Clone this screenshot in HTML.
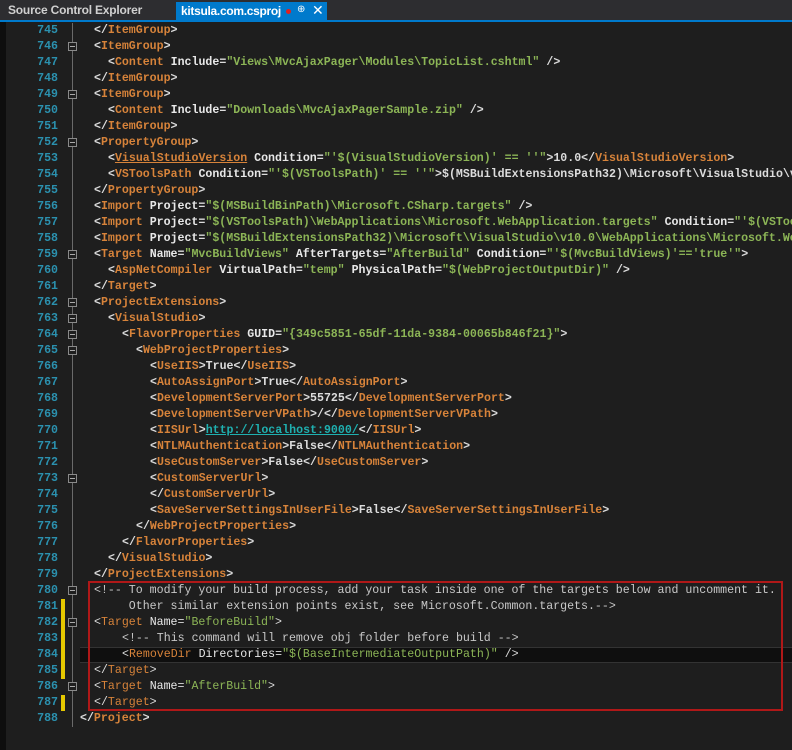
<!DOCTYPE html>
<html><head><meta charset="utf-8"><style>
html,body{margin:0;width:792px;height:750px;overflow:hidden}
body{background:#1e1e1e;position:relative;font-family:"Liberation Sans",sans-serif}
#tabs{position:absolute;left:0;top:0;width:792px;height:20px;background:#2d2d30}
#blue{position:absolute;left:0;top:20px;width:792px;height:2px;background:#007acc}
#t1{position:absolute;left:8px;top:3px;font-size:12px;color:#d0d0d0;font-weight:bold;letter-spacing:-0.2px}
#t2{position:absolute;left:176px;top:2px;width:151px;height:18px;background:#007acc}
#t2 span.n{position:absolute;left:5px;top:2px;font-size:12px;color:#fff;font-weight:bold;letter-spacing:-0.3px}
#strip{position:absolute;left:0;top:22px;width:6px;height:728px;background:#0e0e0e}
#wrap{position:absolute;left:0;top:0;width:792px;height:750px;overflow:hidden}
.ln{position:absolute;left:20px;width:38px;text-align:right;color:#2b91af;font:bold 11.6px/16px "Liberation Mono",monospace}
.code{position:absolute;left:94px;white-space:pre;font:bold 11.6px/16px "Liberation Mono",monospace;color:#dcdcdc}
.code.n{font-weight:normal}
#fold{position:absolute;left:72px;top:23px;width:1px;height:704px;background:#6a6a6a}
.fb{position:absolute;left:68px;width:7px;height:7px;border:1px solid #8a8a8a;background:#1e1e1e}
.fb:after{content:"";position:absolute;left:1px;top:3px;width:5px;height:1px;background:#aaa}
.yb{position:absolute;left:61px;width:4px;background:#e6c800}
.t{color:#d7833a}.v{color:#8cb556}.a{color:#e8e8e8}.c{color:#c8c8c8}.u{color:#1fb0b0;text-decoration:underline}
</style></head><body>
<div id="wrap">
<div id="tabs"></div><div id="blue"></div>
<div id="t1">Source Control Explorer</div>
<div id="t2"><span class="n">kitsula.com.csproj</span>
<div style="position:absolute;left:110px;top:7px;width:5px;height:5px;border-radius:3px;background:#e02020"></div>
<div style="position:absolute;left:121px;top:2px;color:#fff;font-size:10px">⊕</div>
<div style="position:absolute;left:136px;top:0px;color:#fff;font-size:14px">✕</div></div>
<div id="strip"></div>
<div style="position:absolute;left:80px;top:647px;width:712px;height:16px;background:#0f0f0f;border-top:1px solid #333;border-bottom:1px solid #333;box-sizing:border-box"></div>
<div style="position:absolute;left:88px;top:581px;width:695px;height:130px;border:2px solid #b01818;box-sizing:border-box"></div>
<div id="fold"></div>
<div id="lines"></div>
<div class="yb" style="top:599px;height:80px"></div>
<div class="yb" style="top:695px;height:16px"></div>
</div>
<script>
var L=[
[0,'&lt;/<i class=t>ItemGroup</i>&gt;'],
[0,'&lt;<i class=t>ItemGroup</i>&gt;',1],
[2,'&lt;<i class=t>Content</i> <i class=a>Include</i>=<i class=v>"Views\\MvcAjaxPager\\Modules\\TopicList.cshtml"</i> /&gt;'],
[0,'&lt;/<i class=t>ItemGroup</i>&gt;'],
[0,'&lt;<i class=t>ItemGroup</i>&gt;',1],
[2,'&lt;<i class=t>Content</i> <i class=a>Include</i>=<i class=v>"Downloads\\MvcAjaxPagerSample.zip"</i> /&gt;'],
[0,'&lt;/<i class=t>ItemGroup</i>&gt;'],
[0,'&lt;<i class=t>PropertyGroup</i>&gt;',1],
[2,'&lt;<i class=t style="text-decoration:underline">VisualStudioVersion</i> <i class=a>Condition</i>=<i class=v>"\'$(VisualStudioVersion)\' == \'\'"</i>&gt;10.0&lt;/<i class=t>VisualStudioVersion</i>&gt;'],
[2,'&lt;<i class=t>VSToolsPath</i> <i class=a>Condition</i>=<i class=v>"\'$(VSToolsPath)\' == \'\'"</i>&gt;$(MSBuildExtensionsPath32)\\Microsoft\\VisualStudio\\v$(VisualStudioVersion)'],
[0,'&lt;/<i class=t>PropertyGroup</i>&gt;'],
[0,'&lt;<i class=t>Import</i> <i class=a>Project</i>=<i class=v>"$(MSBuildBinPath)\\Microsoft.CSharp.targets"</i> /&gt;'],
[0,'&lt;<i class=t>Import</i> <i class=a>Project</i>=<i class=v>"$(VSToolsPath)\\WebApplications\\Microsoft.WebApplication.targets"</i> <i class=a>Condition</i>=<i class=v>"\'$(VSToolsPath)\' != \'\'"</i>'],
[0,'&lt;<i class=t>Import</i> <i class=a>Project</i>=<i class=v>"$(MSBuildExtensionsPath32)\\Microsoft\\VisualStudio\\v10.0\\WebApplications\\Microsoft.WebApplication.targets"</i>'],
[0,'&lt;<i class=t>Target</i> <i class=a>Name</i>=<i class=v>"MvcBuildViews"</i> <i class=a>AfterTargets</i>=<i class=v>"AfterBuild"</i> <i class=a>Condition</i>=<i class=v>"\'$(MvcBuildViews)\'==\'true\'"</i>&gt;',1],
[2,'&lt;<i class=t>AspNetCompiler</i> <i class=a>VirtualPath</i>=<i class=v>"temp"</i> <i class=a>PhysicalPath</i>=<i class=v>"$(WebProjectOutputDir)"</i> /&gt;'],
[0,'&lt;/<i class=t>Target</i>&gt;'],
[0,'&lt;<i class=t>ProjectExtensions</i>&gt;',1],
[2,'&lt;<i class=t>VisualStudio</i>&gt;',1],
[4,'&lt;<i class=t>FlavorProperties</i> <i class=a>GUID</i>=<i class=v>"{349c5851-65df-11da-9384-00065b846f21}"</i>&gt;',1],
[6,'&lt;<i class=t>WebProjectProperties</i>&gt;',1],
[8,'&lt;<i class=t>UseIIS</i>&gt;True&lt;/<i class=t>UseIIS</i>&gt;'],
[8,'&lt;<i class=t>AutoAssignPort</i>&gt;True&lt;/<i class=t>AutoAssignPort</i>&gt;'],
[8,'&lt;<i class=t>DevelopmentServerPort</i>&gt;55725&lt;/<i class=t>DevelopmentServerPort</i>&gt;'],
[8,'&lt;<i class=t>DevelopmentServerVPath</i>&gt;/&lt;/<i class=t>DevelopmentServerVPath</i>&gt;'],
[8,'&lt;<i class=t>IISUrl</i>&gt;<i class=u>http://localhost:9000/</i>&lt;/<i class=t>IISUrl</i>&gt;'],
[8,'&lt;<i class=t>NTLMAuthentication</i>&gt;False&lt;/<i class=t>NTLMAuthentication</i>&gt;'],
[8,'&lt;<i class=t>UseCustomServer</i>&gt;False&lt;/<i class=t>UseCustomServer</i>&gt;'],
[8,'&lt;<i class=t>CustomServerUrl</i>&gt;',1],
[8,'&lt;/<i class=t>CustomServerUrl</i>&gt;'],
[8,'&lt;<i class=t>SaveServerSettingsInUserFile</i>&gt;False&lt;/<i class=t>SaveServerSettingsInUserFile</i>&gt;'],
[6,'&lt;/<i class=t>WebProjectProperties</i>&gt;'],
[4,'&lt;/<i class=t>FlavorProperties</i>&gt;'],
[2,'&lt;/<i class=t>VisualStudio</i>&gt;'],
[0,'&lt;/<i class=t>ProjectExtensions</i>&gt;'],
[0,'<i class=c>&lt;!-- To modify your build process, add your task inside one of the targets below and uncomment it.</i>',1],
[0,'<i class=c>     Other similar extension points exist, see Microsoft.Common.targets.--&gt;</i>'],
[0,'&lt;<i class=t>Target</i> <i class=a>Name</i>=<i class=v>"BeforeBuild"</i>&gt;',1],
[4,'<i class=c>&lt;!-- This command will remove obj folder before build --&gt;</i>'],
[4,'&lt;<i class=t>RemoveDir</i> <i class=a>Directories</i>=<i class=v>"$(BaseIntermediateOutputPath)"</i> /&gt;'],
[0,'&lt;/<i class=t>Target</i>&gt;'],
[0,'&lt;<i class=t>Target</i> <i class=a>Name</i>=<i class=v>"AfterBuild"</i>&gt;',1],
[0,'&lt;/<i class=t>Target</i>&gt;'],
[-2,'&lt;/<i class=t>Project</i>&gt;']
];
var h='';
L.forEach(function(l,i){var top=23+i*16;var n=(i>=35&&i<=42)?' n':'';
h+='<div class=ln style="top:'+top+'px">'+(745+i)+'</div>';
h+='<div class="code'+n+'" style="top:'+top+'px;left:'+(94+l[0]*7)+'px">'+l[1].replace(/<i /g,'<span ').replace(/<\/i>/g,'</span>')+'</div>';
if(l[2])h+='<div class=fb style="top:'+(top+3)+'px"></div>';});
document.getElementById('lines').innerHTML=h;
</script>
</body></html>
